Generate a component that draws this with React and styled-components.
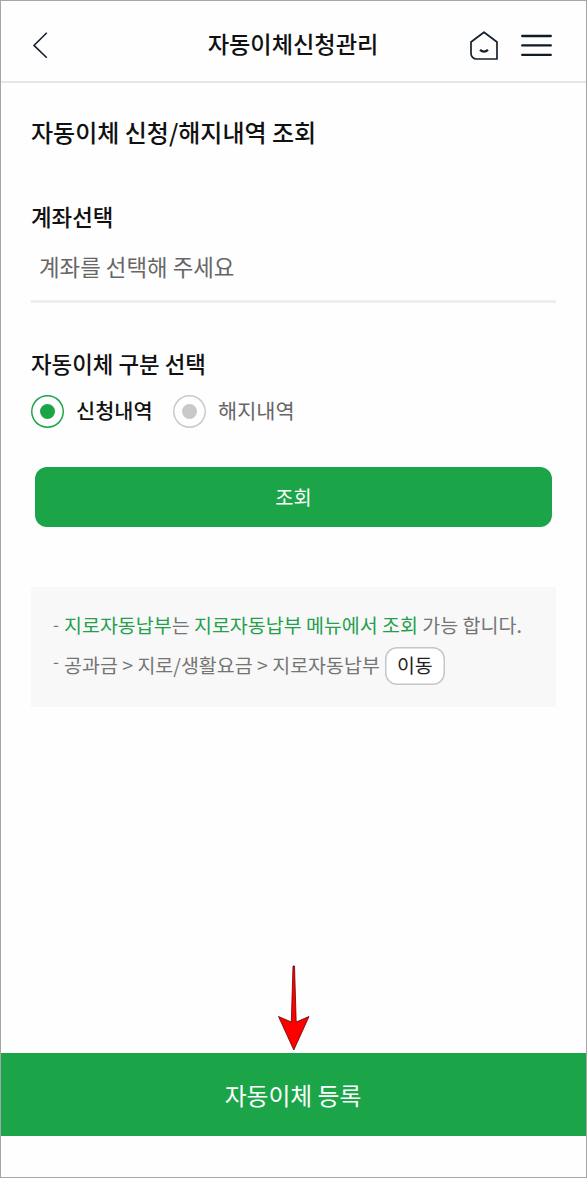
import React from 'react';
import styled, { createGlobalStyle } from 'styled-components';

const GlobalStyle = createGlobalStyle`
  *, *::before, *::after { box-sizing: border-box; }
  body { margin: 0; background: #fefefe; font-family: "Noto Sans CJK KR", sans-serif; color: #111; }
  button { font-family: inherit; padding: 0; border: 0; background: none; }
  h1, h2, h3, p, ul { margin: 0; padding: 0; }
  svg { display: block; }
`;

const Screen = styled.div`
  display: flex;
  flex-direction: column;
  width: 100%;
  height: 1178px;
  border: 1px solid #a6a6a6;
  white-space: nowrap;
`;

const Header = styled.header`
  display: grid;
  grid-template-columns: 100px 1fr 100px;
  align-items: center;
  height: 82px;
  padding: 8px 34px 0 31px;
  border-bottom: 2px solid #e6e6e6;
`;

const Title = styled.h1`
  padding: 0 0 5px 2px;
  font-size: 23.2px;
  font-weight: 500;
  line-height: 34px;
  text-align: center;
`;

const Actions = styled.div`
  display: flex;
  justify-content: flex-end;
  align-items: center;
  gap: 22px;
`;

const IconButton = styled.button`
  width: ${(p) => p.$width}px;
`;

const Content = styled.main`
  flex: 1;
  padding: 31px 30px 0;
`;

const Heading = styled.h2`
  font-size: 24px;
  font-weight: 500;
  line-height: 36px;
`;

const Field = styled.section`
  margin-top: ${(p) => p.$gap}px;
`;

const Label = styled.h3`
  font-size: 22.4px;
  font-weight: 500;
  line-height: 34px;
`;

const AccountSelect = styled.button`
  display: block;
  width: 100%;
  height: 70px;
  padding: 0 8px 1px;
  border-bottom: 3px solid #eee;
  color: #666;
  font-size: 22.4px;
  line-height: 34px;
  text-align: left;
`;

const RadioGroup = styled.div`
  display: flex;
  gap: 20px;
  margin-top: 14px;
`;

const RadioLabel = styled.div`
  display: flex;
  align-items: center;
  gap: 12px;
  width: ${(p) => (p.$checked ? 122 : 130)}px;
  height: 34px;
  color: ${(p) => (p.$checked ? '#111' : '#666')};
  font-size: 20.8px;
  font-weight: ${(p) => (p.$checked ? 500 : 400)};
  line-height: 30px;
`;

const RadioText = styled.span`
  padding-bottom: 2px;
`;

const RadioMark = styled.span`
  display: grid;
  place-items: center;
  width: 33px;
  height: 33px;
  border-radius: 50%;
  box-shadow: inset 0 0 0 1.5px ${(p) => (p.$checked ? '#1ba548' : '#c9c9c9')};
  &::after {
    content: "";
    width: 15px;
    height: 15px;
    border-radius: 50%;
    background: ${(p) => (p.$checked ? '#1ba548' : '#c9c9c9')};
  }
`;

const SearchButton = styled.button`
  display: block;
  width: 517px;
  height: 60px;
  margin: 39px 0 0 4px;
  border-radius: 12px;
  background: #1ba548;
  color: #fff;
  font-size: 19.8px;
  line-height: 60px;
`;

const Notice = styled.ul`
  display: flex;
  flex-direction: column;
  height: 120px;
  margin-top: 60px;
  padding: 18px 22px 0;
  background: #f8f8f8;
  list-style: none;
`;

const NoticeItem = styled.li`
  display: flex;
  height: ${(p) => p.$height}px;
  align-items: center;
  color: #757575;
  font-size: 19.5px;
  line-height: 38px;
`;

const Dash = styled.span`
  width: 11px;
  padding-bottom: ${(p) => p.$raise}px;
  font-size: 17px;
  line-height: 34px;
`;

const NoticeText = styled.p`
  padding-bottom: 2px;
`;

const Accent = styled.span`
  color: #249f4c;
`;

const MoveButton = styled.button`
  width: 60px;
  height: 38px;
  margin-left: 5px;
  padding-bottom: 2px;
  border-radius: 12px;
  box-shadow: inset 0 0 0 1.5px #c6c6c6;
  background: #fff;
  color: #222;
  font-size: 19.4px;
  line-height: 36px;
`;

const Pointer = styled.div`
  display: flex;
  justify-content: center;
  height: 88px;
`;

const RegisterButton = styled.button`
  height: 83px;
  margin-bottom: 41px;
  padding-right: 1px;
  background: #1ba548;
  color: #fff;
  font-size: 23.8px;
  line-height: 83px;
`;

const BackIcon = () => (
  <svg width="18" height="28" viewBox="0 0 18 28" fill="none" stroke="#17202d" strokeWidth="1.6">
    <path d="M14.8 1.8 2 14.4l12.8 12.4" />
  </svg>
);

const HomeIcon = () => (
  <svg width="30" height="30" viewBox="0 0 30 30" fill="none" stroke="#17202d" strokeWidth="1.7" strokeLinejoin="round">
    <path d="M15 2.2 28 12V29H7.5a5.5 5.5 0 0 1-5.5-5.5V12Z" />
    <path d="M11 19.8q4 3.6 8 0" strokeWidth="2.3" />
  </svg>
);

const MenuIcon = () => (
  <svg width="31" height="24" viewBox="0 0 31 24" stroke="#101a29" strokeWidth="2.3" strokeLinecap="round">
    <path d="M1.2 3h28.6M1.2 12.4h28.6M1.2 21.9h28.6" />
  </svg>
);

const ArrowIcon = () => (
  <svg width="34" height="88" viewBox="0 0 34 88">
    <path d="M16 1h1.5l1.7 56L32 51.5 16.8 85 1.5 51.5l12.8 5.5Z" fill="#f00" stroke="#600" strokeWidth=".8" />
  </svg>
);

const Radio = ({ checked, children }) => (
  <RadioLabel $checked={checked} role="radio" aria-checked={!!checked}>
    <RadioMark $checked={checked} />
    <RadioText>{children}</RadioText>
  </RadioLabel>
);

export default function App() {
  return (
    <>
      <GlobalStyle />
      <Screen>
        <Header>
          <IconButton $width={18}><BackIcon /></IconButton>
          <Title>자동이체신청관리</Title>
          <Actions>
            <IconButton $width={30}><HomeIcon /></IconButton>
            <IconButton $width={31}><MenuIcon /></IconButton>
          </Actions>
        </Header>
        <Content>
          <Heading>자동이체 신청/해지내역 조회</Heading>
          <Field $gap={49}>
            <Label>계좌선택</Label>
            <AccountSelect>계좌를 선택해 주세요</AccountSelect>
          </Field>
          <Field $gap={43}>
            <Label>자동이체 구분 선택</Label>
            <RadioGroup role="radiogroup">
              <Radio checked>신청내역</Radio>
              <Radio>해지내역</Radio>
            </RadioGroup>
          </Field>
          <SearchButton>조회</SearchButton>
          <Notice>
            <NoticeItem $height={41}>
              <Dash $raise={4}>-</Dash>
              <NoticeText><Accent>지로자동납부</Accent>는 <Accent>지로자동납부 메뉴에서 조회</Accent> 가능 합니다.</NoticeText>
            </NoticeItem>
            <NoticeItem $height={40}>
              <Dash $raise={10}>-</Dash>
              <NoticeText>공과금 &gt; 지로/생활요금 &gt; 지로자동납부</NoticeText>
              <MoveButton>이동</MoveButton>
            </NoticeItem>
          </Notice>
        </Content>
        <Pointer><ArrowIcon /></Pointer>
        <RegisterButton>자동이체 등록</RegisterButton>
      </Screen>
    </>
  );
}
